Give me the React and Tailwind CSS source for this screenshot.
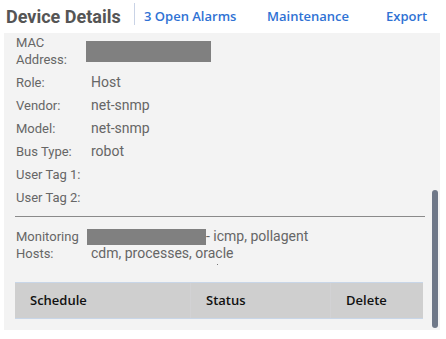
import React from "react";

export default function App() {
  const rows = [
    ["Role:", "Host"],
    ["Vendor:", "net-snmp"],
    ["Model:", "net-snmp"],
    ["Bus Type:", "robot"],
    ["User Tag 1:", ""],
    ["User Tag 2:", ""],
  ];
  return (
    <div className="relative w-[446px] h-[339px] bg-white overflow-hidden" style={{ fontFamily: "Roboto, sans-serif" }}>
      <div className="h-[33px] flex items-center">
        <div className="pl-[6px] w-[134px] text-[18px] font-bold text-[#555] leading-none pt-[1px]" style={{ fontFamily: "Roboto, sans-serif" }}>
          Device Details
        </div>
        <div className="w-px h-[22px] bg-[#c9d3e6] self-start mt-[3px]" />
        <div className="flex text-[13px] font-semibold text-[#2f72d4] pt-[1px]" style={{ fontFamily: "'Open Sans', sans-serif" }}>
          <span className="ml-[9px] w-[123px]">3 Open Alarms</span>
          <span className="w-[119px]">Maintenance</span>
          <span>Export</span>
        </div>
      </div>
      <div className="ml-[4px] w-[436px] h-[297px] bg-[#f3f3f3] text-[13px] text-[#666] leading-[17px] pl-[12px] pr-[16px]">
        <div className="flex flex-col gap-[6px] pt-[1px]">
          <div className="flex items-center">
            <div className="w-[70px]">MAC<br />Address:</div>
            <div className="w-[125px] h-[21px] bg-[#808080]" />
          </div>
          {rows.map(([l, v]) => (
            <div key={l} className="flex">
              <div className="w-[75px]">{l}</div>
              <div className="text-[14px]">{v}</div>
            </div>
          ))}
        </div>
        <div className="mt-[10px] h-px bg-[#8a8a8a] ml-[-1px] w-[410px]" />
        <div className="mt-[11px] flex">
          <div className="w-[71px]">Monitoring<br />Hosts:</div>
          <div className="text-[14px]">
            <div className="flex items-center">
              <div className="w-[119px] h-[16px] bg-[#808080]" />
              <span>- icmp, pollagent</span>
            </div>
            <div className="ml-[4px]">cdm, processes, oracle</div>
          </div>
        </div>
        <div className="h-[20px] relative">
          <span className="absolute left-[201px] top-[2px] w-px h-px bg-[#777]" />
        </div>
        <div className="ml-[-1px] w-[408px] h-[37px] bg-[#cfcfcf] border-y border-[#c8d6e8] flex items-center text-[13px] font-semibold text-[#111]" style={{ fontFamily: "'Open Sans', sans-serif" }}>
          <div className="w-[176px] pl-[15px] h-full flex items-center border-r border-[#d2d2d4]">Schedule</div>
          <div className="w-[140px] pl-[15px] h-full flex items-center border-r border-[#d2d2d4]">Status</div>
          <div className="pl-[15px]">Delete</div>
        </div>
      </div>
      <div className="absolute left-[432px] top-[190px] w-[6px] h-[138px] rounded-[3px] bg-[#6f7888]" />
    </div>
  );
}
